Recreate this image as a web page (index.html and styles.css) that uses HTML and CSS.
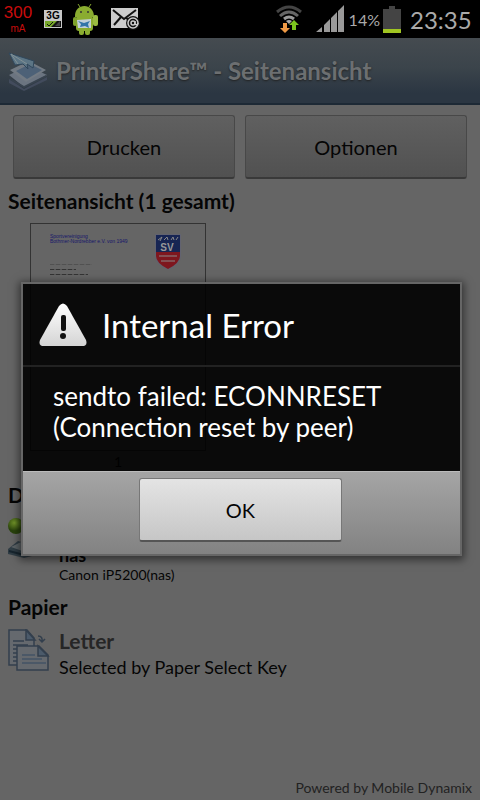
FILE: index.html
```html
<!DOCTYPE html>
<html lang="de">
<head>
    <meta charset="UTF-8">
    <meta name="viewport" content="width=device-width, initial-scale=1">
    <title>PrinterShare</title>
    <link rel="stylesheet" href="styles.css">
</head>
<body>
    <div class="statusbar">
        <div class="current"><span>300</span><small>mA</small></div>
        <svg class="icon-3g" width="20" height="20" viewBox="0 0 20 20">
            <path fill="#c8c8c8" d="M1 1h18v18H1z"/>
            <path fill="#111" d="M2 12h16v6H2z"/>
            <path fill="#77a82a" d="M2 12h12l-6 6H2z"/>
            <path fill="#444" d="M12 17l5-5v5z"/>
            <path stroke="#111" d="M4 15l2 2 4-4" fill="none"/>
            <text x="10" y="10" text-anchor="middle" class="label-3g">3G</text>
        </svg>
        <svg class="icon-android" width="26" height="34" viewBox="0 0 26 34">
            <path stroke="#86a62f" d="M5 2l2 3M18 2l-2 3"/>
            <path fill="#8aac30" d="M2 15C1 1 21 0 21 15z"/>
            <rect fill="#8aac30" x="3" y="14" width="17" height="15" rx="3"/>
            <rect fill="#7fa32c" x="0" y="15" width="4" height="9" rx="2"/>
            <rect fill="#9abb42" x="20" y="13" width="5" height="11" rx="2"/>
            <rect fill="#8aac30" x="6" y="26" width="5" height="7" rx="2"/>
            <rect fill="#8aac30" x="12" y="26" width="5" height="7" rx="2"/>
            <circle cx="8" cy="10" r="1" fill="#333"/>
            <circle cx="15" cy="10" r="1" fill="#333"/>
            <path fill="#c2d0d8" d="M4 18l14-1v9H5z"/>
            <path fill="#3275a8" d="M5 19l6 2 6-2-2 3 1 4-4-2-5 1 1-3z"/>
        </svg>
        <svg class="icon-mail" width="30" height="24" viewBox="0 0 30 24">
            <path fill="#ccc" d="M1 1h27v20H1z"/>
            <path fill="none" stroke="#111" stroke-width="2" d="M3 3l11 9L26 3M4 18l7-8M16 11l3 2"/>
            <circle cx="23" cy="16" r="7" fill="#111"/>
            <circle cx="23" cy="16" r="5" fill="none" stroke="#ccc" stroke-width="1.5"/>
            <circle cx="23" cy="16" r="2" fill="none" stroke="#ccc" stroke-width="1.5"/>
            <path fill="none" stroke="#ccc" stroke-width="1.5" d="M25 14v3q2 2 3-1"/>
        </svg>
        <svg class="icon-wifi" width="26" height="28" viewBox="0 0 26 28">
            <g fill="none" stroke-width="3">
                <path stroke="#444" d="M1 7Q13-3 25 7"/>
                <path stroke="#666" d="M4 11q9-8 18 0"/>
                <path stroke="#999" d="M8 14q5-4 10 0"/>
            </g>
            <path fill="#aaa" d="M10 16q3-2 6 0l-3 3z"/>
            <path fill="#f09a45" d="M7 18h4v5h3l-5 5-5-5h3z"/>
            <path fill="#7cc51e" d="M16 25h4v-5h3l-5-5-5 5h3z"/>
        </svg>
        <svg class="icon-signal" width="29" height="28" viewBox="0 0 29 28">
            <path fill="#999" d="M0 27l6-5v5zM8 20l6-6v13H8zM15 13l6-6v20h-6zM22 6l6-6v27h-6z"/>
        </svg>
        <span class="percent">14%</span>
        <svg class="icon-battery" width="18" height="27" viewBox="0 0 18 27">
            <path fill="#444" d="M6 0h6v3h6v24H0V3h6z"/>
            <path fill="#a0c522" d="M0 23h18v4H0z"/>
        </svg>
        <span class="clock">23:35</span>
    </div>

    <div class="app">
        <header class="titlebar">
            <svg width="40" height="40" viewBox="0 0 40 40">
                <path fill="#424b5c" d="M1 28l15 10 23-12v3L16 40 1 32z"/>
                <path fill="#6b7480" d="M1 24l19-9 19 9-23 12z"/>
                <path fill="#38434f" d="M2 29l14 8 22-11v-2L16 35 2 27z"/>
                <path fill="#727a83" d="M2 19l19-9 17 9-20 12z"/>
                <path fill="#4d6177" d="M8 20l14-7 12 6-15 9z"/>
                <path fill="#5c7585" stroke="#30475b" d="M1 2l25 8-1 7-6-4 1 5-5-5-8 1z"/>
                <path fill="none" stroke="#819094" d="M3 3l16 10M3 3l7 10"/>
            </svg>
            <h1>PrinterShare™ - Seitenansicht</h1>
        </header>

        <main class="content">
            <div class="actions">
                <button type="button">Drucken</button>
                <button type="button">Optionen</button>
            </div>

            <h2>Seitenansicht (1 gesamt)</h2>
            <figure class="preview">
                <div class="sheet">
                    <div class="sheet-head">
                        <p>Sportvereinigung<br>Bothmer-Nordrebber e.V. von 1949</p>
                        <svg width="26" height="36" viewBox="0 0 26 36">
                            <path fill="#626370" d="M0 0h26v22q0 8-13 14Q0 30 0 22z"/>
                            <path fill="#172553" d="M1 1h24v17H1z"/>
                            <path fill="#7e161e" d="M1 18h24v4q0 7-12 13Q1 29 1 22z"/>
                            <path fill="none" stroke="#888" d="M3 6l4-3-2 4M9 6l3-3 1 3M16 6l2-3 1 3M21 6l2-3M4 22h18M6 27h14"/>
                            <text x="12" y="17" text-anchor="middle" class="crest-text">SV</text>
                        </svg>
                    </div>
                    <div class="line faint"></div>
                    <div class="line short"></div>
                    <div class="line medium"></div>
                    <div class="line wide"></div>
                </div>
                <figcaption>1</figcaption>
            </figure>

            <h2>Drucker</h2>
            <section class="item printer">
                <svg width="42" height="42" viewBox="0 0 42 42">
                    <defs>
                        <radialGradient id="ball" cx=".4" cy=".3">
                            <stop offset="0" stop-color="#729529"/>
                            <stop offset="1" stop-color="#29420c"/>
                        </radialGradient>
                    </defs>
                    <path fill="#303d45" d="M0 32l10-8 23 7-1 6-16 4L0 37z"/>
                    <path fill="#5d6467" d="M3 30l10-5 17 6-10 5z"/>
                    <path fill="none" stroke="#17252e" stroke-width="2" d="M1 34l15 4 14-4"/>
                    <circle cx="8" cy="9" r="8" fill="url(#ball)"/>
                </svg>
                <div>
                    <h3>nas</h3>
                    <p>Canon iP5200(nas)</p>
                </div>
            </section>

            <h2>Papier</h2>
            <section class="item">
                <svg width="42" height="42" viewBox="0 0 42 42">
                    <g fill="#65696e" stroke="#333f4d" stroke-width="1.5">
                        <path d="M1 1h18l7 8v27H1z"/>
                        <path fill="#4b5a6a" d="M18 1v10h9z"/>
                        <path fill="none" d="M5 12h11M5 16h15M5 20h4M5 24h4M5 28h4M5 32h4"/>
                        <path d="M9 17h22l9 9v15H9z"/>
                        <path fill="#4b5a6a" d="M30 17v10h10z"/>
                        <path fill="none" stroke="#435365" d="M14 26h13M14 30h20M14 34h24"/>
                        <path fill="none" d="M30 7q5 0 4 6M31 10l3 3 3-3"/>
                    </g>
                </svg>
                <div>
                    <h3>Letter</h3>
                    <p>Selected by Paper Select Key</p>
                </div>
            </section>
        </main>

        <footer>Powered by Mobile Dynamix</footer>

        <div class="overlay">
            <div class="dialog" role="alertdialog" aria-labelledby="dialog-title" aria-describedby="dialog-message">
                <div class="dialog-title">
                    <svg width="48" height="44" viewBox="0 0 48 44">
                        <defs>
                            <linearGradient id="warn" x2="0" y2="1">
                                <stop offset="0" stop-color="#fff"/>
                                <stop offset="1" stop-color="#d4d4d4"/>
                            </linearGradient>
                        </defs>
                        <path fill="url(#warn)" d="M20 3q4-5 8 0l19 34q2 6-4 6H5q-6 0-4-6z"/>
                        <rect x="22" y="12" width="5" height="16" rx="2" fill="#111"/>
                        <circle cx="24" cy="33" r="3" fill="#111"/>
                    </svg>
                    <h2 id="dialog-title">Internal Error</h2>
                </div>
                <p class="dialog-message" id="dialog-message">sendto failed: ECONNRESET (Connection reset by peer)</p>
                <div class="dialog-buttons">
                    <button type="button">OK</button>
                </div>
            </div>
        </div>
    </div>
</body>
</html>
```
FILE: styles.css
```css
* {
    box-sizing: border-box;
}

body {
    margin: 0;
    min-height: 100vh;
    display: flex;
    flex-direction: column;
    font-family: Lato, "Noto Sans", sans-serif;
    background-color: #656565;
    color: #050505;
}

h1, h2, h3, p, figure {
    margin: 0;
}

svg {
    flex: none;
    display: block;
}

button {
    font-family: inherit;
    font-size: 20px;
    color: #050505;
    border-radius: 3px;
    cursor: pointer;
}

.statusbar {
    height: 38px;
    padding: 0 10px 0 3px;
    display: flex;
    align-items: center;
    background-color: #000;
    color: #aaa;
}

.current {
    display: flex;
    flex-direction: column;
    align-items: center;
    width: 30px;
    font-family: "Liberation Sans", Arial, sans-serif;
    font-size: 17px;
    line-height: 20px;
    color: #c80c0c;
}

.current small {
    font-size: 10px;
    line-height: 12px;
}

.icon-3g {
    margin-left: 10px;
}

.label-3g {
    font: bold 10px "Liberation Sans", sans-serif;
}

.icon-android {
    margin-left: 10px;
}

.icon-mail {
    margin-left: 11px;
}

.icon-wifi {
    margin-left: auto;
}

.icon-signal {
    margin: 0 4px 0 14px;
}

.percent {
    font-size: 16px;
}

.icon-battery {
    margin: 0 9px 0 3px;
}

.clock {
    width: 60px;
    font-size: 24px;
    text-align: right;
}

.app {
    position: relative;
    flex: 1;
    display: flex;
    flex-direction: column;
}

.titlebar {
    display: flex;
    align-items: center;
    gap: 8px;
    height: 67px;
    padding: 0 8px;
    background: linear-gradient(#454b50, #3b444b 45%, #2b3642 85%, #2b3642);
    border-bottom: 2px solid #1d2935;
}

.titlebar h1 {
    font-size: 24px;
    line-height: 32px;
    color: #6c6f71;
    text-shadow: 0 1px 2px #222;
}

.content {
    flex: 1;
    padding: 10px 8px;
}

.actions {
    display: flex;
    gap: 10px;
    padding: 0 5px;
}

.actions button {
    flex: 1;
    height: 64px;
    background: linear-gradient(#606060, #515151);
    border: 1px solid #484848;
    border-bottom: 2px solid #393939;
}

.content h2 {
    font-size: 21px;
    line-height: 28px;
    margin-top: 8px;
}

.preview {
    width: 176px;
    margin: 8px 0 0 22px;
}

.sheet {
    height: 228px;
    padding: 10px 24px 10px 19px;
    border: 1px solid #333;
}

.sheet-head {
    display: flex;
    justify-content: space-between;
    margin-bottom: -6px;
}

.sheet-head p {
    font-family: "Liberation Sans", Arial, sans-serif;
    font-size: 5px;
    line-height: 5px;
    white-space: nowrap;
    color: #17176a;
}

.crest-text {
    font: bold 10px "Liberation Sans", sans-serif;
    fill: #999;
}

.line {
    height: 1px;
    margin-bottom: 4px;
    background: repeating-linear-gradient(90deg, #333 0 4px, #555 4px 6px);
}

.line.faint {
    width: 42px;
    opacity: 0.4;
}

.line.short {
    width: 26px;
}

.line.medium {
    width: 38px;
    margin-bottom: 8px;
}

.line.wide {
    width: 110px;
}

.preview figcaption {
    font-size: 14px;
    line-height: 22px;
    text-align: center;
}

.item {
    display: flex;
    gap: 9px;
    padding: 8px 0 4px;
}

.item h3 {
    font-size: 21px;
    line-height: 24px;
    color: #262626;
}

.item p {
    font-size: 18px;
    line-height: 28px;
}

.printer {
    padding-bottom: 0;
}

.printer h3 {
    padding-top: 28px;
    font-size: 18px;
    line-height: 20px;
    color: #050505;
}

.printer p {
    font-size: 14px;
    line-height: 20px;
}

footer {
    padding: 0 8px 2px;
    font-size: 14px;
    line-height: 20px;
    text-align: right;
    color: #222;
}

.overlay {
    position: absolute;
    inset: 0;
    display: grid;
    align-items: center;
    padding: 0 18px 0 21px;
}

.dialog {
    border: 2px solid #666;
    background-color: rgba(0, 0, 0, 0.9);
    box-shadow: 0 2px 8px 2px rgba(0, 0, 0, 0.5);
    color: #fff;
}

.dialog-title {
    display: flex;
    align-items: center;
    gap: 15px;
    height: 83px;
    padding: 0 16px;
    border-bottom: 2px solid #222;
}

.dialog-title h2 {
    font-size: 33px;
    font-weight: normal;
    line-height: 40px;
}

.dialog-message {
    padding: 14px 30px 28px;
    font-size: 26px;
    line-height: 31px;
}

.dialog-buttons {
    display: flex;
    justify-content: center;
    padding: 6px 8px 12px 6px;
    background: linear-gradient(#a5a5a5, #828282);
    border-top: 1px solid #bbb;
}

.dialog-buttons button {
    width: 48%;
    height: 64px;
    background: linear-gradient(#e4e4e4, #c6c6c6);
    border: 1px solid #777;
    border-bottom: 2px solid #555;
}
```
